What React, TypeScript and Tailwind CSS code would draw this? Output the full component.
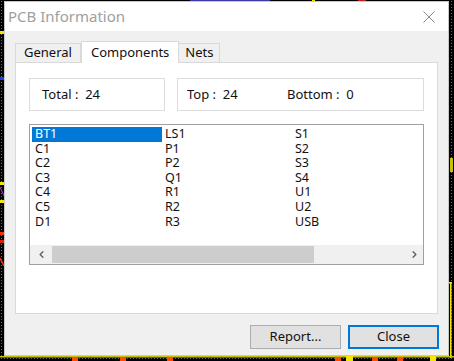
import { ChevronLeft, ChevronRight } from "lucide-react";

const columns = [
  ["BT1", "C1", "C2", "C3", "C4", "C5", "D1"],
  ["LS1", "P1", "P2", "Q1", "R1", "R2", "R3"],
  ["S1", "S2", "S3", "S4", "U1", "U2", "USB"],
];

// PCB editor canvas peeking out behind the dialog
function PcbCanvas() {
  return (
    <svg className="absolute inset-0" width="454" height="361" viewBox="0 0 454 361">
      <defs>
        <pattern id="grid" width="3" height="3" patternUnits="userSpaceOnUse">
          <rect x="1" y="1" width="1" height="1" fill="#6b6b6b" />
        </pattern>
      </defs>
      <rect width="454" height="361" fill="#000" />
      <rect width="454" height="361" fill="url(#grid)" />
      {/* left edge */}
      <rect x="0" y="31" width="4" height="3" fill="#f5e600" />
      <rect x="0" y="77" width="4" height="3" fill="#1a3cff" />
      <rect x="0" y="182" width="4" height="3" fill="#f5e600" />
      <line x1="0" y1="187" x2="4" y2="196" stroke="#b43cc8" strokeWidth="1" />
      <rect x="0" y="200" width="4" height="3" fill="#f5e600" />
      <rect x="0" y="232" width="4" height="3" fill="#ff2a00" />
      <rect x="0" y="240" width="4" height="3" fill="#e02000" />
      <line x1="0" y1="258" x2="4" y2="266" stroke="#ff2a00" strokeWidth="1.5" />
      {/* top edge */}
      <rect x="190" y="0" width="80" height="1.5" fill="#3a3aa8" />
      <rect x="312" y="0" width="3" height="1.5" fill="#f5e600" />
      <rect x="358" y="0" width="8" height="1.5" fill="#c02020" />
      {/* right edge */}
      <rect x="450" y="158" width="3" height="14" fill="#c8c000" />
      <rect x="450" y="283" width="1.5" height="75" fill="#f5e600" />
      <rect x="444" y="282" width="8" height="1.5" fill="#f5e600" />
      {/* bottom edge */}
      <rect x="0" y="356" width="454" height="1.5" fill="#c8c000" />
      <rect x="72" y="357" width="6" height="4" fill="#ff4a00" />
      <rect x="120" y="357" width="6" height="4" fill="#ff4a00" />
      <rect x="167" y="357" width="6" height="4" fill="#ff4a00" />
      <rect x="335" y="357" width="6" height="4" fill="#ff4a00" />
      <rect x="346" y="356" width="7" height="5" fill="#f5e600" />
      <rect x="372" y="357" width="6" height="4" fill="#ff4a00" />
      <rect x="397" y="357" width="6" height="4" fill="#ff4a00" />
      <rect x="430" y="356" width="6" height="5" fill="#f5e600" />
    </svg>
  );
}

export default function App() {
  return (
    <div className="relative h-[361px] w-[454px] overflow-hidden bg-black pl-[4px] pt-[1px] font-['Noto_Sans',sans-serif]">
      <PcbCanvas />

      <div className="relative flex h-[355px] w-[445px] flex-col border border-[#c8c8c8] bg-[#f0f0f0]">
        {/* Title bar */}
        <div className="flex h-[29px] items-center justify-between bg-white pl-[3px] pr-[12px]">
          <span className="text-[15px] text-[#a0a0a0]">PCB Information</span>
          <svg width="12" height="12" viewBox="0 0 12 12" className="mr-[1px]">
            <path d="M0.5 0.5 L11.5 11.5 M11.5 0.5 L0.5 11.5" stroke="#8a8a8a" strokeWidth="1" fill="none" />
          </svg>
        </div>

        {/* Tabs */}
        <div className="flex h-[31px] items-end pl-[10px]">
          <div className="flex h-[19px] items-center border border-b-0 border-[#d9d9d9] bg-[#f0f0f0] px-[8px] text-[13px] text-[#111]">
            General
          </div>
          <div className="relative -mb-px flex h-[22px] items-center border border-b-0 border-[#d9d9d9] bg-white px-[9px] text-[13px] text-[#111]">
            Components
          </div>
          <div className="flex h-[19px] items-center border border-b-0 border-l-0 border-[#d9d9d9] bg-[#f0f0f0] px-[6px] text-[13px] text-[#111]">
            Nets
          </div>
        </div>

        {/* Tab panel */}
        <div className="mx-[10px] flex h-[252px] w-[423px] flex-col border border-[#d9d9d9] bg-white px-[13px] pt-[15px]">
          <div className="flex gap-[12px]">
            <div className="flex h-[33px] w-[136px] items-center border border-[#dcdcdc] pl-[12px] text-[13px] text-[#111]">
              Total :&nbsp;&nbsp;24
            </div>
            <div className="flex h-[33px] flex-1 items-center border border-[#dcdcdc] pl-[9px] text-[13px] text-[#111]">
              <span className="w-[100px]">Top :&nbsp;&nbsp;24</span>
              <span>Bottom :&nbsp;&nbsp;0</span>
            </div>
          </div>

          {/* Component list */}
          <div className="mt-[13px] flex h-[141px] flex-col border border-[#a0a0a0] bg-white">
            <div className="flex flex-1 pl-[2px] pt-[2px]">
              {columns.map((col, ci) => (
                <div key={ci} className="flex w-[130px] flex-col">
                  {col.map((name, ri) => {
                    const selected = ci === 0 && ri === 0;
                    return (
                      <div
                        key={name}
                        className={`h-[14.6px] pl-[3px] text-[12.5px] leading-[14.6px] ${
                          selected ? "bg-[#0078d7] text-white" : "text-[#111]"
                        }`}
                      >
                        {name}
                      </div>
                    );
                  })}
                </div>
              ))}
            </div>

            {/* Horizontal scrollbar */}
            <div className="flex h-[19px] items-stretch bg-[#f0f0f0]">
              <div className="flex w-[22px] items-center justify-center text-[#606060]">
                <ChevronLeft size={11} strokeWidth={3} />
              </div>
              <div className="my-[1px] w-[262px] bg-[#cdcdcd]" />
              <div className="flex-1" />
              <div className="flex w-[18px] items-center justify-center text-[#606060]">
                <ChevronRight size={11} strokeWidth={3} />
              </div>
            </div>
          </div>
        </div>

        {/* Buttons */}
        <div className="flex flex-1 items-end justify-end gap-[7px] pb-[6px] pr-[9px]">
          <button
            type="button"
            className="flex h-[24px] w-[91px] items-center justify-center border border-[#adadad] bg-[#e1e1e1] text-[13px] text-[#111]"
          >
            Report...
          </button>
          <button
            type="button"
            className="flex h-[24px] w-[91px] items-center justify-center border-2 border-[#0078d7] bg-[#e1e1e1] text-[13px] text-[#111]"
          >
            Close
          </button>
        </div>
      </div>
    </div>
  );
}
